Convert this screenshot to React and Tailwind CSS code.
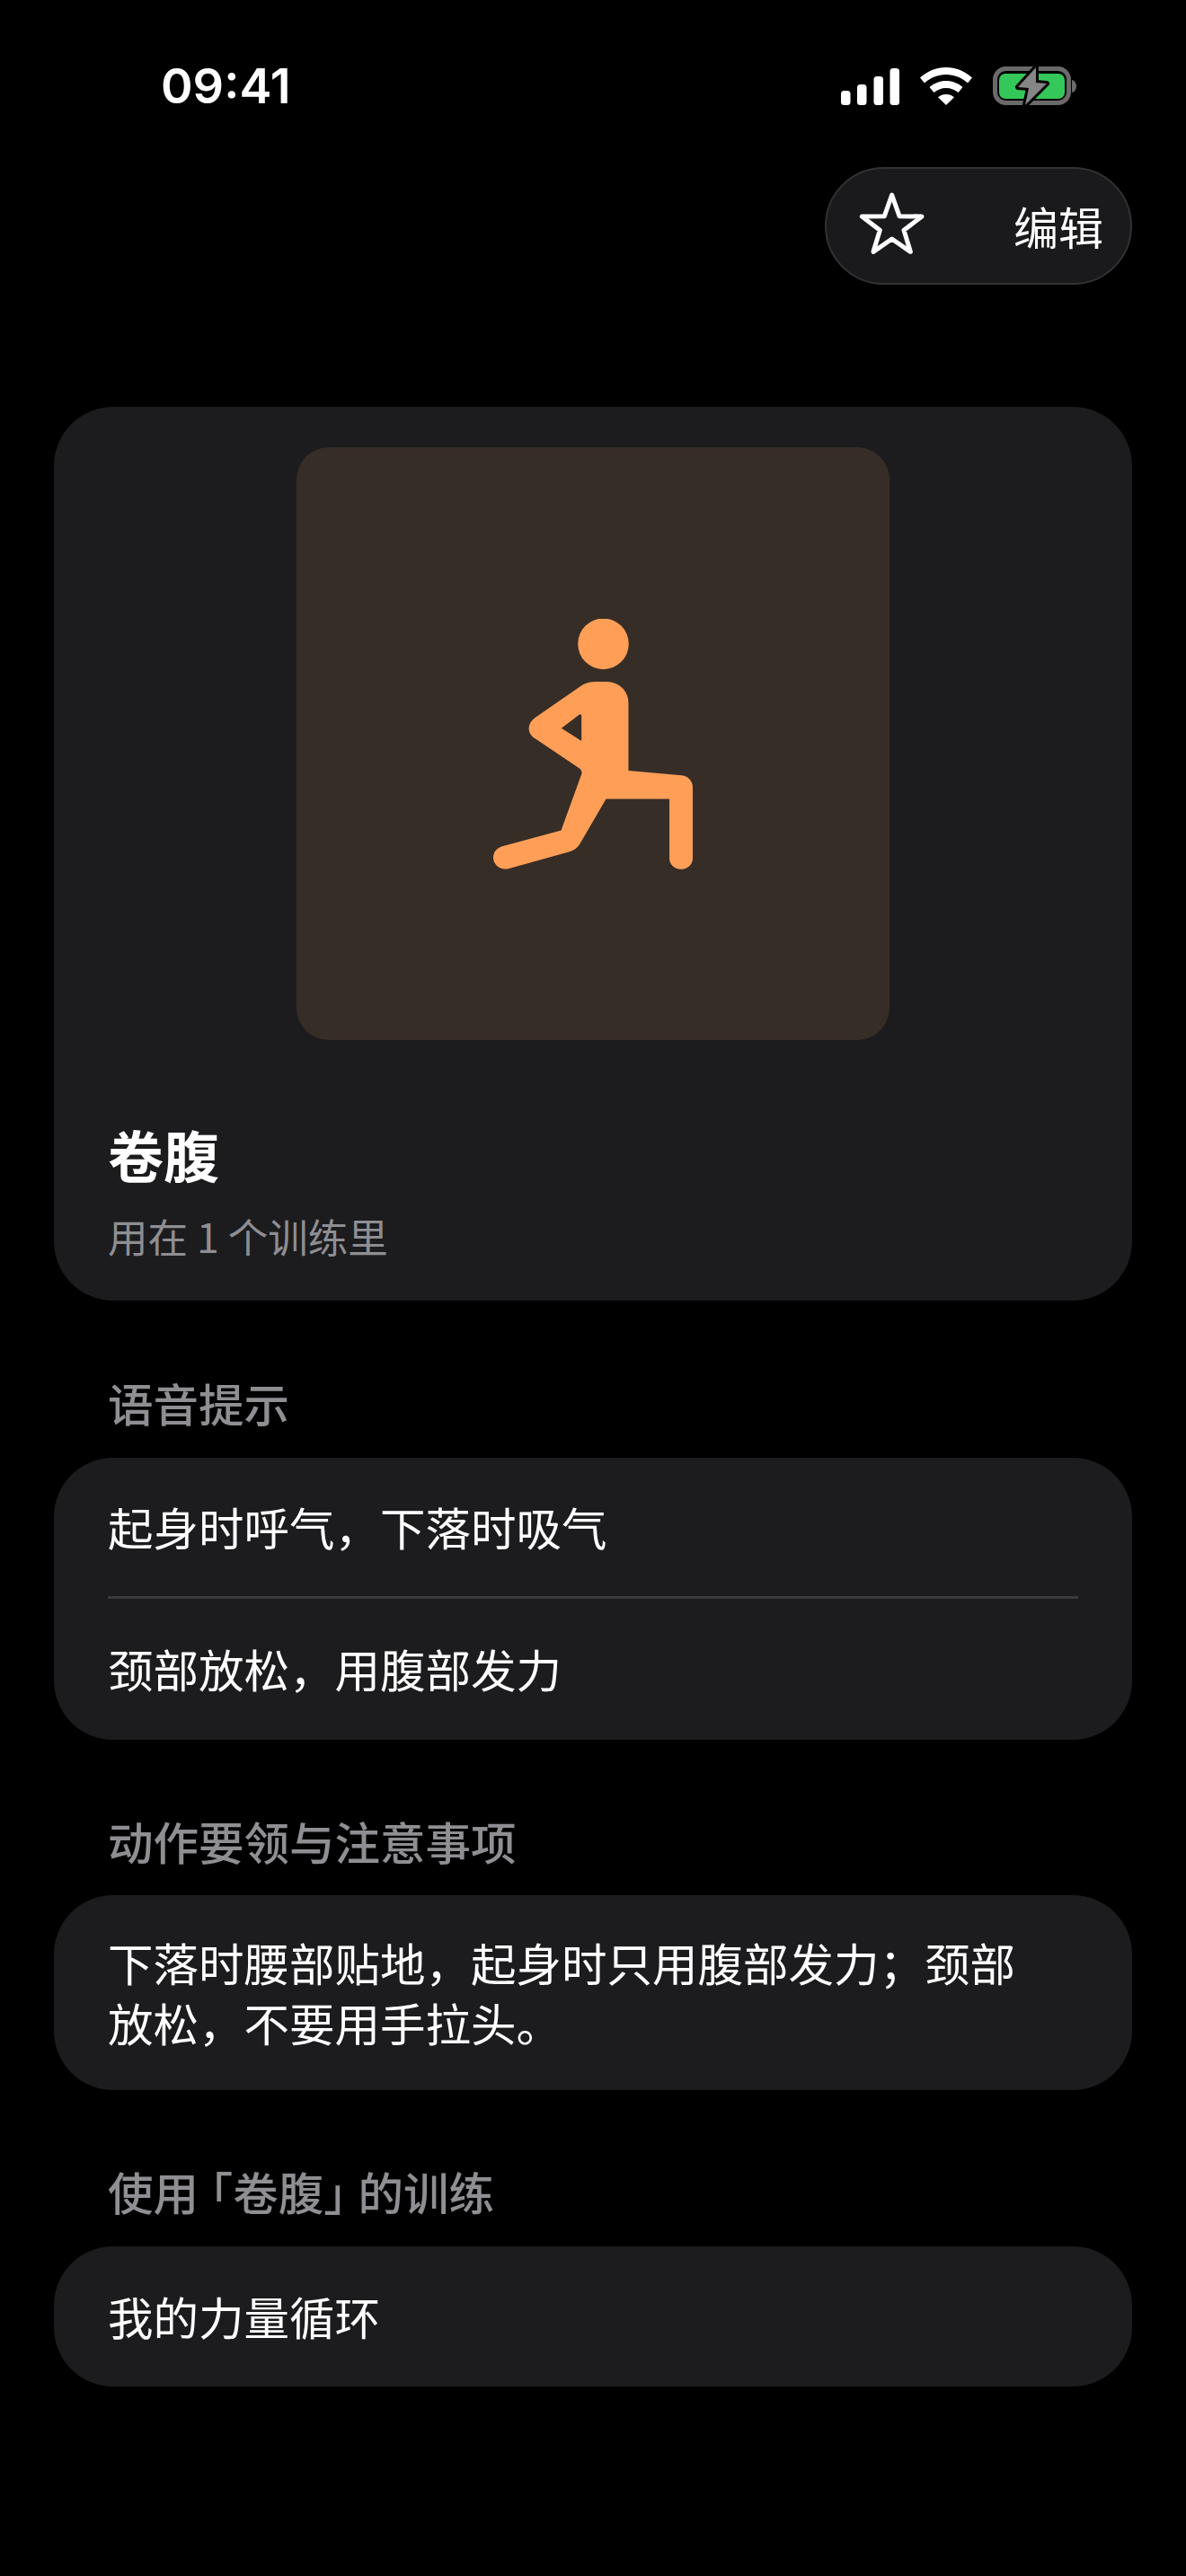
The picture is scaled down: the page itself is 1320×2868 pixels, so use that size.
const cjk = { fontFamily: '"Noto Sans CJK SC", "Noto Sans", sans-serif' };

function StatusIcons() {
    return (
        <div className="flex items-center gap-[23px]">
            <svg width="65" height="41" viewBox="0 0 65 41">
                <rect x="0" y="25" width="10.500" height="16" rx="3.500" fill="#fff" />
                <rect x="18" y="18" width="10.500" height="23" rx="3.500" fill="#fff" />
                <rect x="36.500" y="9" width="10.500" height="32" rx="3.500" fill="#fff" />
                <rect x="54.500" y="0" width="10.500" height="41" rx="3.500" fill="#fff" />
            </svg>
            <svg width="58" height="42" viewBox="0 0 58 42" fill="#fff">
                <path d="M29 0c11 0 21 4.300 29 11.500l-5 6C46.500 11.500 38 8 29 8S11.500 11.500 5 17.500l-5-6C8 4.300 18 0 29 0z" />
                <path d="M29 15c7 0 13.500 2.700 18.500 7l-5 6c-3.500-3-8.300-5-13.500-5s-10 2-13.500 5l-5-6c5-4.300 11.500-7 18.500-7z" />
                <path d="M29 30c3.500 0 6.700 1.200 9 3.300L29 42l-9-8.700c2.300-2.100 5.500-3.300 9-3.300z" />
            </svg>
            <svg width="93" height="44" viewBox="0 0 93 44">
                <rect x="2.500" y="2.500" width="82" height="38" rx="12" fill="none" stroke="#6a6a6a" strokeWidth="5" />
                <rect x="7" y="8" width="73" height="28" rx="7" fill="#34c759" />
                <path d="M88 15c3 .5 5 3.500 5 7s-2 6.500-5 7z" fill="#6a6a6a" />
                <path d="M48 1 28 23l12 1-4 19 24-24-12-1z" fill="#858585" stroke="#000" strokeWidth="6" strokeLinejoin="round" paintOrder="stroke" />
            </svg>
        </div>
    );
}

function StarIcon() {
    return (
        <svg width="80" height="80" viewBox="0 0 240 240" fill="none" stroke="#fff" strokeWidth="15" strokeLinejoin="round">
            <path d="M116 15l25 71 75 1-60 46 22 72-62-43-62 43 22-72-60-46 75-1z" />
        </svg>
    );
}

function LungeIcon() {
    return (
        <svg width="222" height="279" viewBox="145 115 667 837" fill="#ff9f57">
            <circle cx="513" cy="198" r="85" />
            <path
                fillRule="evenodd"
                d="M597 622V395c0-40-32-70-75-70h-30c-22 0-38 3-55 15L285 445c-28 20-28 52 0 70l145 97c10 7 13 13 10 22L372 822l-197 53c-22 6-30 24-30 38 0 24 24 44 50 37l205-57c16-4 28-14 36-28l86-148h212v198c0 22 18 37 39 37s39-15 39-37V678c0-22-16-38-37-40zM373 480l58-44c5-4 9-2 9 4v83z"
            />
        </svg>
    );
}

function SectionLabel({ className, children }) {
    return <h3 className={`pl-[60px] text-[50.5px] leading-[72px] font-medium text-[#8e8e93] ${className}`}>{children}</h3>;
}

export default function App() {
    return (
        <div className="h-[2868px] overflow-hidden bg-black text-white" style={cjk}>
            {/* Status bar */}
            <div className="flex items-center justify-between pt-[63px] pl-[179px] pr-[122px]">
                <span className="text-[54px] leading-[66px] font-semibold" style={{ fontFamily: 'Inter, sans-serif' }}>09:41</span>
                <StatusIcons />
            </div>

            {/* Top action */}
            <div className="flex justify-end px-[60px] pt-[57px]">
                <div className="flex h-[131px] w-[342px] items-center justify-between rounded-full border-2 border-[#323234] bg-[#1a1a1c] pl-[34px] pr-[30px]">
                    <StarIcon />
                    <span className="-mt-[2px] text-[50px] leading-none">编辑</span>
                </div>
            </div>

            <div className="mt-[136px] px-[60px]">
                {/* Exercise card */}
                <div className="rounded-[66px] bg-[#1c1c1e] px-[60px] pt-[45px] pb-[42px]">
                    <div className="mx-auto flex h-[660px] w-[660px] items-center justify-center rounded-[36px] bg-[#372d27]">
                        <LungeIcon />
                    </div>
                    <h1 className="mt-[87px] text-[62px] leading-[80px] font-bold">卷腹</h1>
                    <p className="mt-[21px] text-[44.500px] leading-[60px] text-[#8e8e93]">用在 1 个训练里</p>
                </div>

                {/* Voice cues */}
                <SectionLabel className="mt-[77px] mb-[26px]">语音提示</SectionLabel>
                <div className="rounded-[66px] bg-[#1c1c1e] px-[60px] text-[50.5px]">
                    <div className="flex h-[154px] items-center">起身时呼气，下落时吸气</div>
                    <div className="h-[3px] bg-[#3a3a3c]" />
                    <div className="flex h-[157px] items-center pb-[2px]">颈部放松，用腹部发力</div>
                </div>

                {/* Form notes */}
                <SectionLabel className="mt-[76px] mb-[25px]">动作要领与注意事项</SectionLabel>
                <div className="rounded-[66px] bg-[#1c1c1e] px-[60px] pt-[41px] pb-[42px] text-[50.5px] leading-[67px]">
                    下落时腰部贴地，起身时只用腹部发力；颈部<br />放松，不要用手拉头。
                </div>

                {/* Used in */}
                <SectionLabel className="mt-[76px] mb-[26px]">
                    使用<span className="ml-[13px] [font-feature-settings:'halt']">「</span>卷腹<span className="mr-[13px] [font-feature-settings:'halt']">」</span>的训练
                </SectionLabel>
                <div className="flex h-[156px] items-center rounded-[66px] bg-[#1c1c1e] px-[60px] text-[50.5px]">我的力量循环</div>
            </div>
        </div>
    );
}
